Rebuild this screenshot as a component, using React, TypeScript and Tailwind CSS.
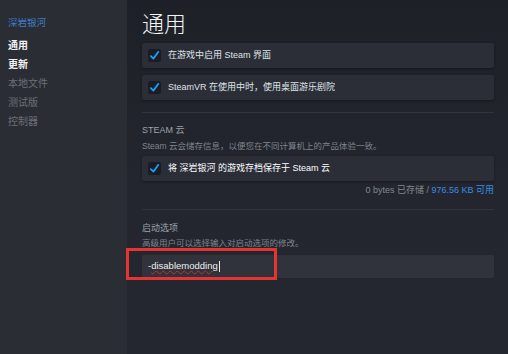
import React from "react";

const font = { fontFamily: '"Liberation Sans", "Noto Sans CJK SC", sans-serif' };

const navItems = [
  { label: "通用", active: true },
  { label: "更新", active: true },
  { label: "本地文件", active: false },
  { label: "测试版", active: false },
  { label: "控制器", active: false },
];

function Check() {
  return (
    <div className="flex h-[13px] w-[13px] shrink-0 items-center justify-center rounded-[2px] bg-[#1a1d23]">
      <svg width="11" height="11" viewBox="0 0 12 12" fill="none">
        <path
          d="M2 6.6 L4.8 9.4 L10.2 2"
          stroke="#1a9fff"
          strokeWidth="1.9"
          strokeLinecap="round"
          strokeLinejoin="round"
        />
      </svg>
    </div>
  );
}

function Row({ children, bright }: { children: React.ReactNode; bright?: boolean }) {
  return (
    <div className="flex h-[25px] items-center gap-[7px] rounded-[2px] bg-[#2b2e37] pl-[6px] shadow-[0_1px_3px_rgba(0,0,0,0.35)]">
      <Check />
      <span className={`text-[9px] leading-none ${bright ? "text-white" : "text-[#dfe3e8]"}`}>
        {children}
      </span>
    </div>
  );
}

export default function App() {
  return (
    <div className="flex h-[354px] w-[508px] overflow-hidden bg-[#23262e]" style={font}>
      {/* sidebar */}
      <div className="w-[127px] shrink-0 bg-[#2a2d33] pl-[8px] pt-[14px]">
        <div className="flex h-[19px] items-center text-[9.5px] text-[#3f7dc6]">深岩银河</div>
        <div className="mt-[3px] flex flex-col">
          {navItems.map((n) => (
            <div
              key={n.label}
              className={`flex h-[19px] items-center text-[10px] ${
                n.active ? "font-bold text-[#f1f3f5]" : "text-[#6b7078]"
              }`}
            >
              {n.label}
            </div>
          ))}
        </div>
      </div>

      {/* main */}
      <div className="relative flex-1 bg-gradient-to-b from-[#1d2026] via-[#23262e] to-[#24272f] pl-[15px] pr-[14px] pt-[10px]">
        <div className="flex h-[30px] items-center text-[22px] font-light leading-none text-[#f3f4f6]">通用</div>

        <div className="mt-[3px]">
          <Row>在游戏中启用 Steam 界面</Row>
        </div>
        <div className="mt-[7px]">
          <Row>SteamVR 在使用中时，使用桌面游乐剧院</Row>
        </div>

        <div className="mt-[12px] h-px bg-[#30343c]" />

        <div className="mt-[11px] flex h-[14px] items-center text-[9px] text-[#9ca2aa]">STEAM 云</div>
        <div className="mt-[2px] flex h-[12px] items-center text-[8.5px] text-[#7e848c]">
          Steam 云会储存信息，以便您在不同计算机上的产品体验一致。
        </div>
        <div className="mt-[4px]">
          <Row bright>将 深岩银河 的游戏存档保存于 Steam 云</Row>
        </div>
        <div className="mt-[4px] flex h-[12px] items-center justify-end text-[9px] text-[#80868e]">
          0 bytes 已存储 /&nbsp;<span className="text-[#3a8be0]">976.56 KB 可用</span>
        </div>

        <div className="mt-[12px] h-px bg-[#30343c]" />

        <div className="mt-[12px] flex h-[14px] items-center text-[9px] text-[#9ca2aa]">启动选项</div>
        <div className="mt-[1px] flex h-[12px] items-center text-[8.5px] text-[#7e848c]">
          高级用户可以选择输入对启动选项的修改。
        </div>
        <div className="mt-[6px] flex h-[23px] items-center rounded-[2px] bg-[#30333b] pl-[6px] text-[9.5px] text-[#eef0f2]">
          <span>-</span>
          <span className="underline decoration-wavy decoration-[#b83434] decoration-1 underline-offset-1">
            disablemodding
          </span>
          <span className="ml-px h-[11px] w-px bg-[#e8e8e8]" />
        </div>

        {/* annotation box */}
        <div className="absolute left-[-1px] top-[248px] h-[32px] w-[151px] border-[3px] border-[#e63431]" />
      </div>
    </div>
  );
}
